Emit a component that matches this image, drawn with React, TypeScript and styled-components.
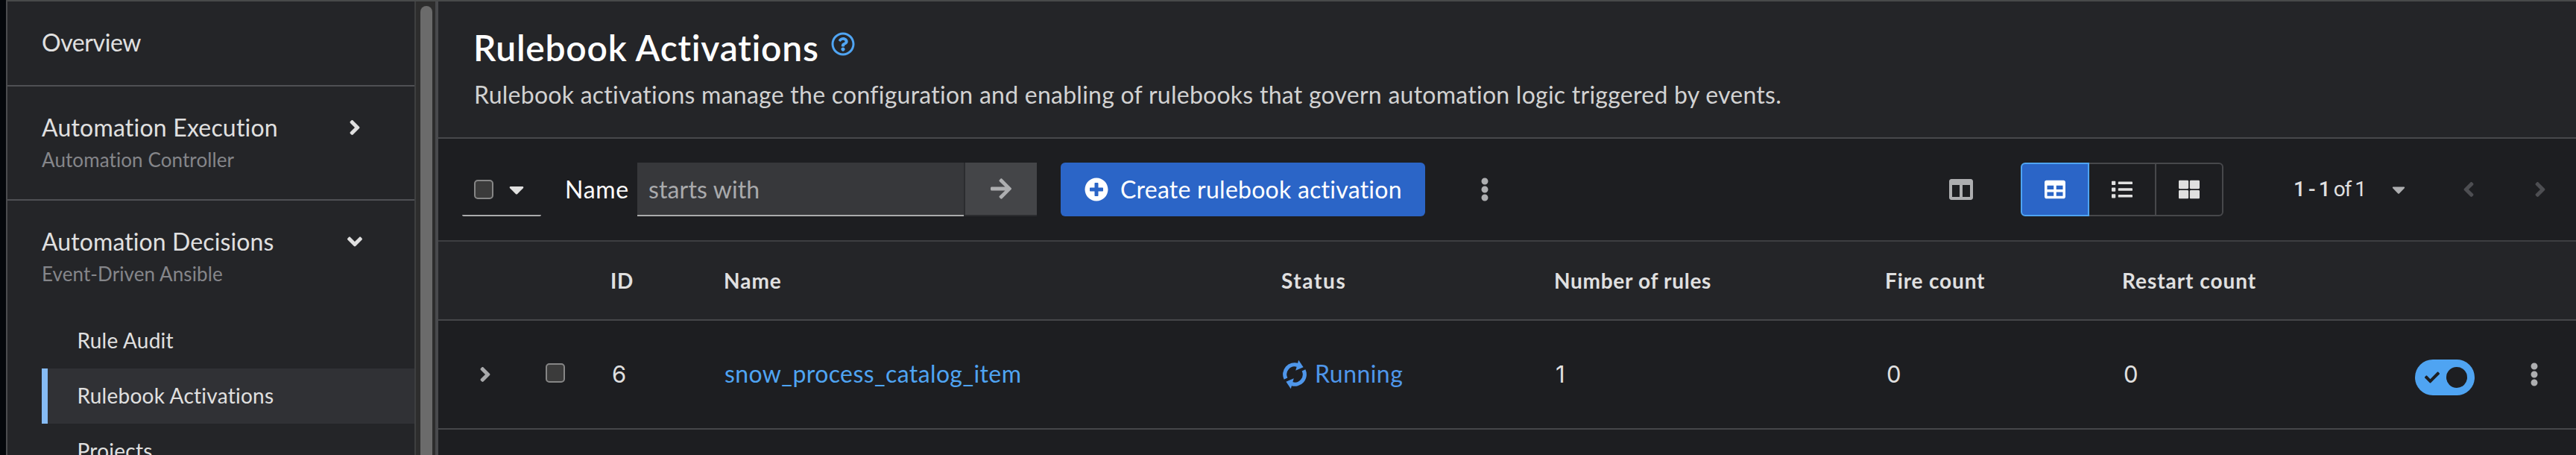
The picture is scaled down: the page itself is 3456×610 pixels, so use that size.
import React from 'react';
import styled, { createGlobalStyle } from 'styled-components';
import {
  FaAngleDown,
  FaAngleLeft,
  FaAngleRight,
  FaArrowRight,
  FaCaretDown,
  FaCheck,
  FaColumns,
  FaEllipsisV,
  FaList,
  FaPlusCircle,
  FaRegQuestionCircle,
  FaTable,
  FaThLarge,
} from 'react-icons/fa';

const GlobalStyle = createGlobalStyle`
  *, *::before, *::after { box-sizing: border-box; }
  body {
    margin: 0;
    background: #1d1e21;
    color: #e0e0e0;
    font-family: Lato, "Liberation Sans", sans-serif;
    font-size: 32px;
    line-height: 39px;
    overflow: hidden;
  }
  h1, p { margin: 0; font-weight: 400; }
  button, input { font: inherit; color: inherit; border: 0; margin: 0; padding: 0; background: none; outline: none; }
  svg { display: block; flex: none; }
`;

const Shell = styled.div`
  display: flex;
  width: 3456px;
  height: 610px;
  overflow: hidden;
  background: #04070b;
  padding-left: 8px;
`;

const Frame = styled.div`
  display: flex;
  flex: 1;
  border-top: 2px solid #484a4a;
`;

/* Sidebar */
const Sidebar = styled.nav`
  width: 548px;
  flex: none;
  background: #242528;
  border-left: 2px solid #4b4c4f;
`;

const NavSection = styled.section<{ $height: number }>`
  height: ${(p) => p.$height}px;
  padding-top: 35px;
  border-bottom: 2px solid #4f5054;
`;

const NavTitle = styled.div<{ $track?: number }>`
  display: flex;
  align-items: center;
  justify-content: space-between;
  height: 39px;
  padding: 0 64px 0 46px;
  letter-spacing: ${(p) => p.$track ?? 0}px;
  white-space: nowrap;
`;

const NavCaption = styled.div`
  margin-top: 8px;
  padding-left: 46px;
  font-size: 26px;
  line-height: 32px;
  letter-spacing: 0.1px;
  color: #85868a;
`;

const NavList = styled.div`
  margin: 37px 0 0 46px;
`;

const NavItem = styled.div<{ $active?: boolean }>`
  height: 74px;
  padding: 19px 0 0 ${(p) => (p.$active ? 39.5 : 47.5)}px;
  border-left: ${(p) => (p.$active ? '8px solid #86bbf4' : '0')};
  background: ${(p) => (p.$active ? '#303135' : 'transparent')};
  font-size: 28px;
  line-height: 34px;
  letter-spacing: 0.25px;
`;

const ScrollTrack = styled.div`
  width: 32px;
  flex: none;
  padding: 6px 4px 0 6px;
  background: #2d2d2d;
  border-left: 2px solid #3e3f40;
  border-right: 4px solid #48494c;
`;

const ScrollThumb = styled.div`
  width: 16px;
  height: 700px;
  border-radius: 8px;
  background: #6b6b6b;
`;

/* Main column */
const Main = styled.main`
  flex: 1;
  min-width: 0;
  background: #1d1e21;
`;

const PageHeader = styled.header`
  height: 184px;
  padding: 33px 0 0 48px;
  background: #242528;
  border-bottom: 2px solid #47484b;
`;

const TitleRow = styled.div`
  display: flex;
  align-items: flex-start;
  gap: 15px;
  color: #50a5f3;
  svg { margin-top: 8px; }
`;

const Title = styled.h1`
  width: 465px;
  margin-left: -1px;
  white-space: nowrap;
  font-size: 48px;
  line-height: 57px;
  font-weight: 600;
  letter-spacing: 0.75px;
  color: #fff;
`;

const Description = styled.p`
  margin-top: 15px;
  color: #d2d2d2;
  letter-spacing: 0.255px;
  white-space: nowrap;
`;

const Toolbar = styled.div`
  display: flex;
  align-items: center;
  height: 138px;
  padding: 0 32px;
  border-bottom: 2px solid #3d3e41;
`;

const Checkbox = styled.span`
  display: block;
  width: 26px;
  height: 26px;
  border: 2px solid #868686;
  border-radius: 5px;
  background: #3b3b3b;
`;

const BulkSelect = styled.div`
  display: flex;
  align-items: center;
  gap: 15px;
  width: 106px;
  height: 72px;
  padding: 2px 0 0 16px;
  border-bottom: 2px solid #aaabac;
  border-radius: 2px;
`;

const FilterLabel = styled.span`
  width: 97px;
  margin-left: 32px;
  padding-bottom: 1px;
  letter-spacing: 0.7px;
  color: #fff;
`;

const FilterInput = styled.input`
  width: 438px;
  height: 72px;
  padding: 2px 0 1px 15px;
  background: #37383b;
  border-bottom: 2px solid #aaabac;
  letter-spacing: 0.13px;
  &::placeholder { color: #a9aaac; opacity: 1; }
`;

const ApplyButton = styled.button`
  display: flex;
  align-items: center;
  justify-content: center;
  width: 98px;
  height: 72px;
  background: #444548;
  border-left: 2px solid #2b2c2f;
  border-bottom: 2px solid #2b2c2f;
  color: #adaeb0;
`;

const PrimaryButton = styled.button`
  display: flex;
  align-items: center;
  gap: 16px;
  width: 489px;
  height: 72px;
  margin-left: 32px;
  padding-left: 32px;
  border-radius: 6px;
  background: #2b65c7;
  color: #fff;
  letter-spacing: 0.25px;
  white-space: nowrap;
  span { padding-bottom: 1px; }
`;

const IconButton = styled.button<{ $color: string; $offset: number }>`
  display: flex;
  margin-left: ${(p) => p.$offset}px;
  color: ${(p) => p.$color};
`;

const ViewToggle = styled.div`
  display: flex;
  width: 272px;
  height: 72px;
  margin-left: 64px;
`;

const ViewOption = styled.button<{ $selected?: boolean }>`
  display: flex;
  align-items: center;
  justify-content: center;
  flex: 1 1 0;
  margin-left: -2px;
  border: 2px solid ${(p) => (p.$selected ? '#4fa4f2' : '#47484b')};
  background: ${(p) => (p.$selected ? '#2b65c7' : 'transparent')};
  color: ${(p) => (p.$selected ? '#fff' : '#e0e0e0')};
  position: relative;
  z-index: ${(p) => (p.$selected ? 1 : 0)};
  &:first-child { margin-left: 0; border-radius: 6px 0 0 6px; }
  &:last-child { border-radius: 0 6px 6px 0; }
`;

const Pager = styled.div`
  display: flex;
  align-items: center;
  margin-left: auto;
`;

const PageRange = styled.span`
  width: 127px;
  padding-bottom: 1px;
  font-family: Roboto, "Liberation Sans", sans-serif;
  font-size: 28px;
  line-height: 34px;
  letter-spacing: -1.4px;
  white-space: nowrap;
  b { font-weight: 500; }
`;

const PageStep = styled.button`
  display: flex;
  color: #4d4e52;
  margin-left: 64px;
`;

/* Table */
const TableRow = styled.div<{ $head?: boolean }>`
  display: grid;
  grid-template-columns: 88px 88px 152px 748px 366px 444px 318px 392px 147px 1fr;
  align-items: center;
  height: ${(p) => (p.$head ? 106 : 146)}px;
  padding-left: 56px;
  background: ${(p) => (p.$head ? '#242528' : 'transparent')};
  border-bottom: 2px solid #454649;
`;

const HeadCell = styled.div<{ $track: number }>`
  margin-left: -1px;
  font-size: 28px;
  line-height: 34px;
  font-weight: 700;
  letter-spacing: ${(p) => p.$track}px;
`;

const Cell = styled.div<{ $lift?: number }>`
  display: flex;
  align-items: center;
  padding-bottom: ${(p) => p.$lift ?? 3}px;
`;

const NumberCell = styled(Cell)`
  font-family: Inter, "Liberation Sans", sans-serif;
  font-size: 31px;
  padding: 0 0 1px 1px;
`;

const ExpandCell = styled(Cell)`
  margin-left: -9px;
  color: #a9aaac;
`;

const NameLink = styled.span`
  color: #4fa4f2;
  letter-spacing: 0.4px;
`;

const StatusLabel = styled.div`
  display: flex;
  align-items: center;
  gap: 11px;
  padding: 0 0 1px 1px;
  color: #4f97eb;
  letter-spacing: 0.45px;
  span { padding-bottom: 2px; }
`;

const Switch = styled.div`
  display: flex;
  align-items: center;
  justify-content: space-between;
  width: 80px;
  height: 48px;
  margin-top: 8px;
  padding: 0 10px 0 13px;
  border-radius: 24px;
  background: #4fa4f2;
  color: #1d1e21;
`;

const SwitchKnob = styled.span`
  width: 28px;
  height: 28px;
  border-radius: 50%;
  background: #1d1e21;
`;

const RunningIcon = () => (
  <svg width="32" height="40" viewBox="0 0 32 40" fill="currentColor">
    {[0, 180].map((turn) => (
      <g key={turn} transform={`rotate(${turn} 16 20)`}>
        <path d="M4 25.6A13.1 13.1 0 0 1 20 7.5" fill="none" stroke="currentColor" strokeWidth="5.2" />
        <path d="M21.2 0.8 27.6 10.2 17.2 14.8Z" />
      </g>
    ))}
  </svg>
);

const columns = [
  { label: '', track: 0 },
  { label: '', track: 0 },
  { label: 'ID', track: 0.8 },
  { label: 'Name', track: 1 },
  { label: 'Status', track: 1.6 },
  { label: 'Number of rules', track: 0.7 },
  { label: 'Fire count', track: 0.85 },
  { label: 'Restart count', track: 0.95 },
  { label: '', track: 0 },
  { label: '', track: 0 },
];

export default function App() {
  return (
    <Shell>
      <GlobalStyle />
      <Frame>
        <Sidebar>
          <NavSection $height={114}>
            <NavTitle $track={-0.4}>Overview</NavTitle>
          </NavSection>
          <NavSection $height={153}>
            <NavTitle $track={0.2}>
              Automation Execution
              <FaAngleRight size={32} />
            </NavTitle>
            <NavCaption>Automation Controller</NavCaption>
          </NavSection>
          <NavSection $height={420}>
            <NavTitle $track={0.1}>
              Automation Decisions
              <FaAngleDown size={32} />
            </NavTitle>
            <NavCaption>Event-Driven Ansible</NavCaption>
            <NavList>
              <NavItem>Rule Audit</NavItem>
              <NavItem $active>Rulebook Activations</NavItem>
              <NavItem>Projects</NavItem>
            </NavList>
          </NavSection>
        </Sidebar>
        <ScrollTrack>
          <ScrollThumb />
        </ScrollTrack>
        <Main>
          <PageHeader>
            <TitleRow>
              <Title>Rulebook Activations</Title>
              <FaRegQuestionCircle size={32} />
            </TitleRow>
            <Description>
              Rulebook activations manage the configuration and enabling of rulebooks that govern automation logic
              triggered by events.
            </Description>
          </PageHeader>
          <Toolbar>
            <BulkSelect>
              <Checkbox />
              <FaCaretDown size={32} />
            </BulkSelect>
            <FilterLabel>Name</FilterLabel>
            <FilterInput placeholder="starts with" />
            <ApplyButton>
              <FaArrowRight size={32} />
            </ApplyButton>
            <PrimaryButton>
              <FaPlusCircle size={32} />
              <span>Create rulebook activation</span>
            </PrimaryButton>
            <IconButton $color="#adaeb0" $offset={64}>
              <FaEllipsisV size={32} />
            </IconButton>
            <IconButton $color="#adaeb0" $offset={607}>
              <FaColumns size={32} />
            </IconButton>
            <ViewToggle>
              <ViewOption $selected>
                <FaTable size={28} />
              </ViewOption>
              <ViewOption>
                <FaList size={28} />
              </ViewOption>
              <ViewOption>
                <FaThLarge size={28} />
              </ViewOption>
            </ViewToggle>
            <Pager>
              <PageRange>
                <b>1 - 1</b> of 1
              </PageRange>
              <IconButton $color="#adaeb0" $offset={0}>
                <FaCaretDown size={28} />
              </IconButton>
              <PageStep>
                <FaAngleLeft size={32} />
              </PageStep>
              <PageStep>
                <FaAngleRight size={32} />
              </PageStep>
            </Pager>
          </Toolbar>
          <TableRow $head>
            {columns.map(({ label, track }, i) => (
              <HeadCell key={i} $track={track}>
                {label}
              </HeadCell>
            ))}
          </TableRow>
          <TableRow>
            <ExpandCell $lift={0}>
              <FaAngleRight size={32} />
            </ExpandCell>
            <Cell $lift={4}>
              <Checkbox />
            </Cell>
            <NumberCell>6</NumberCell>
            <Cell>
              <NameLink>snow_process_catalog_item</NameLink>
            </Cell>
            <StatusLabel>
              <RunningIcon />
              <span>Running</span>
            </StatusLabel>
            <NumberCell>1</NumberCell>
            <NumberCell>0</NumberCell>
            <NumberCell>0</NumberCell>
            <Switch>
              <FaCheck size={20} />
              <SwitchKnob />
            </Switch>
            <IconButton $color="#adaeb0" $offset={-3}>
              <FaEllipsisV size={32} />
            </IconButton>
          </TableRow>
        </Main>
      </Frame>
    </Shell>
  );
}
